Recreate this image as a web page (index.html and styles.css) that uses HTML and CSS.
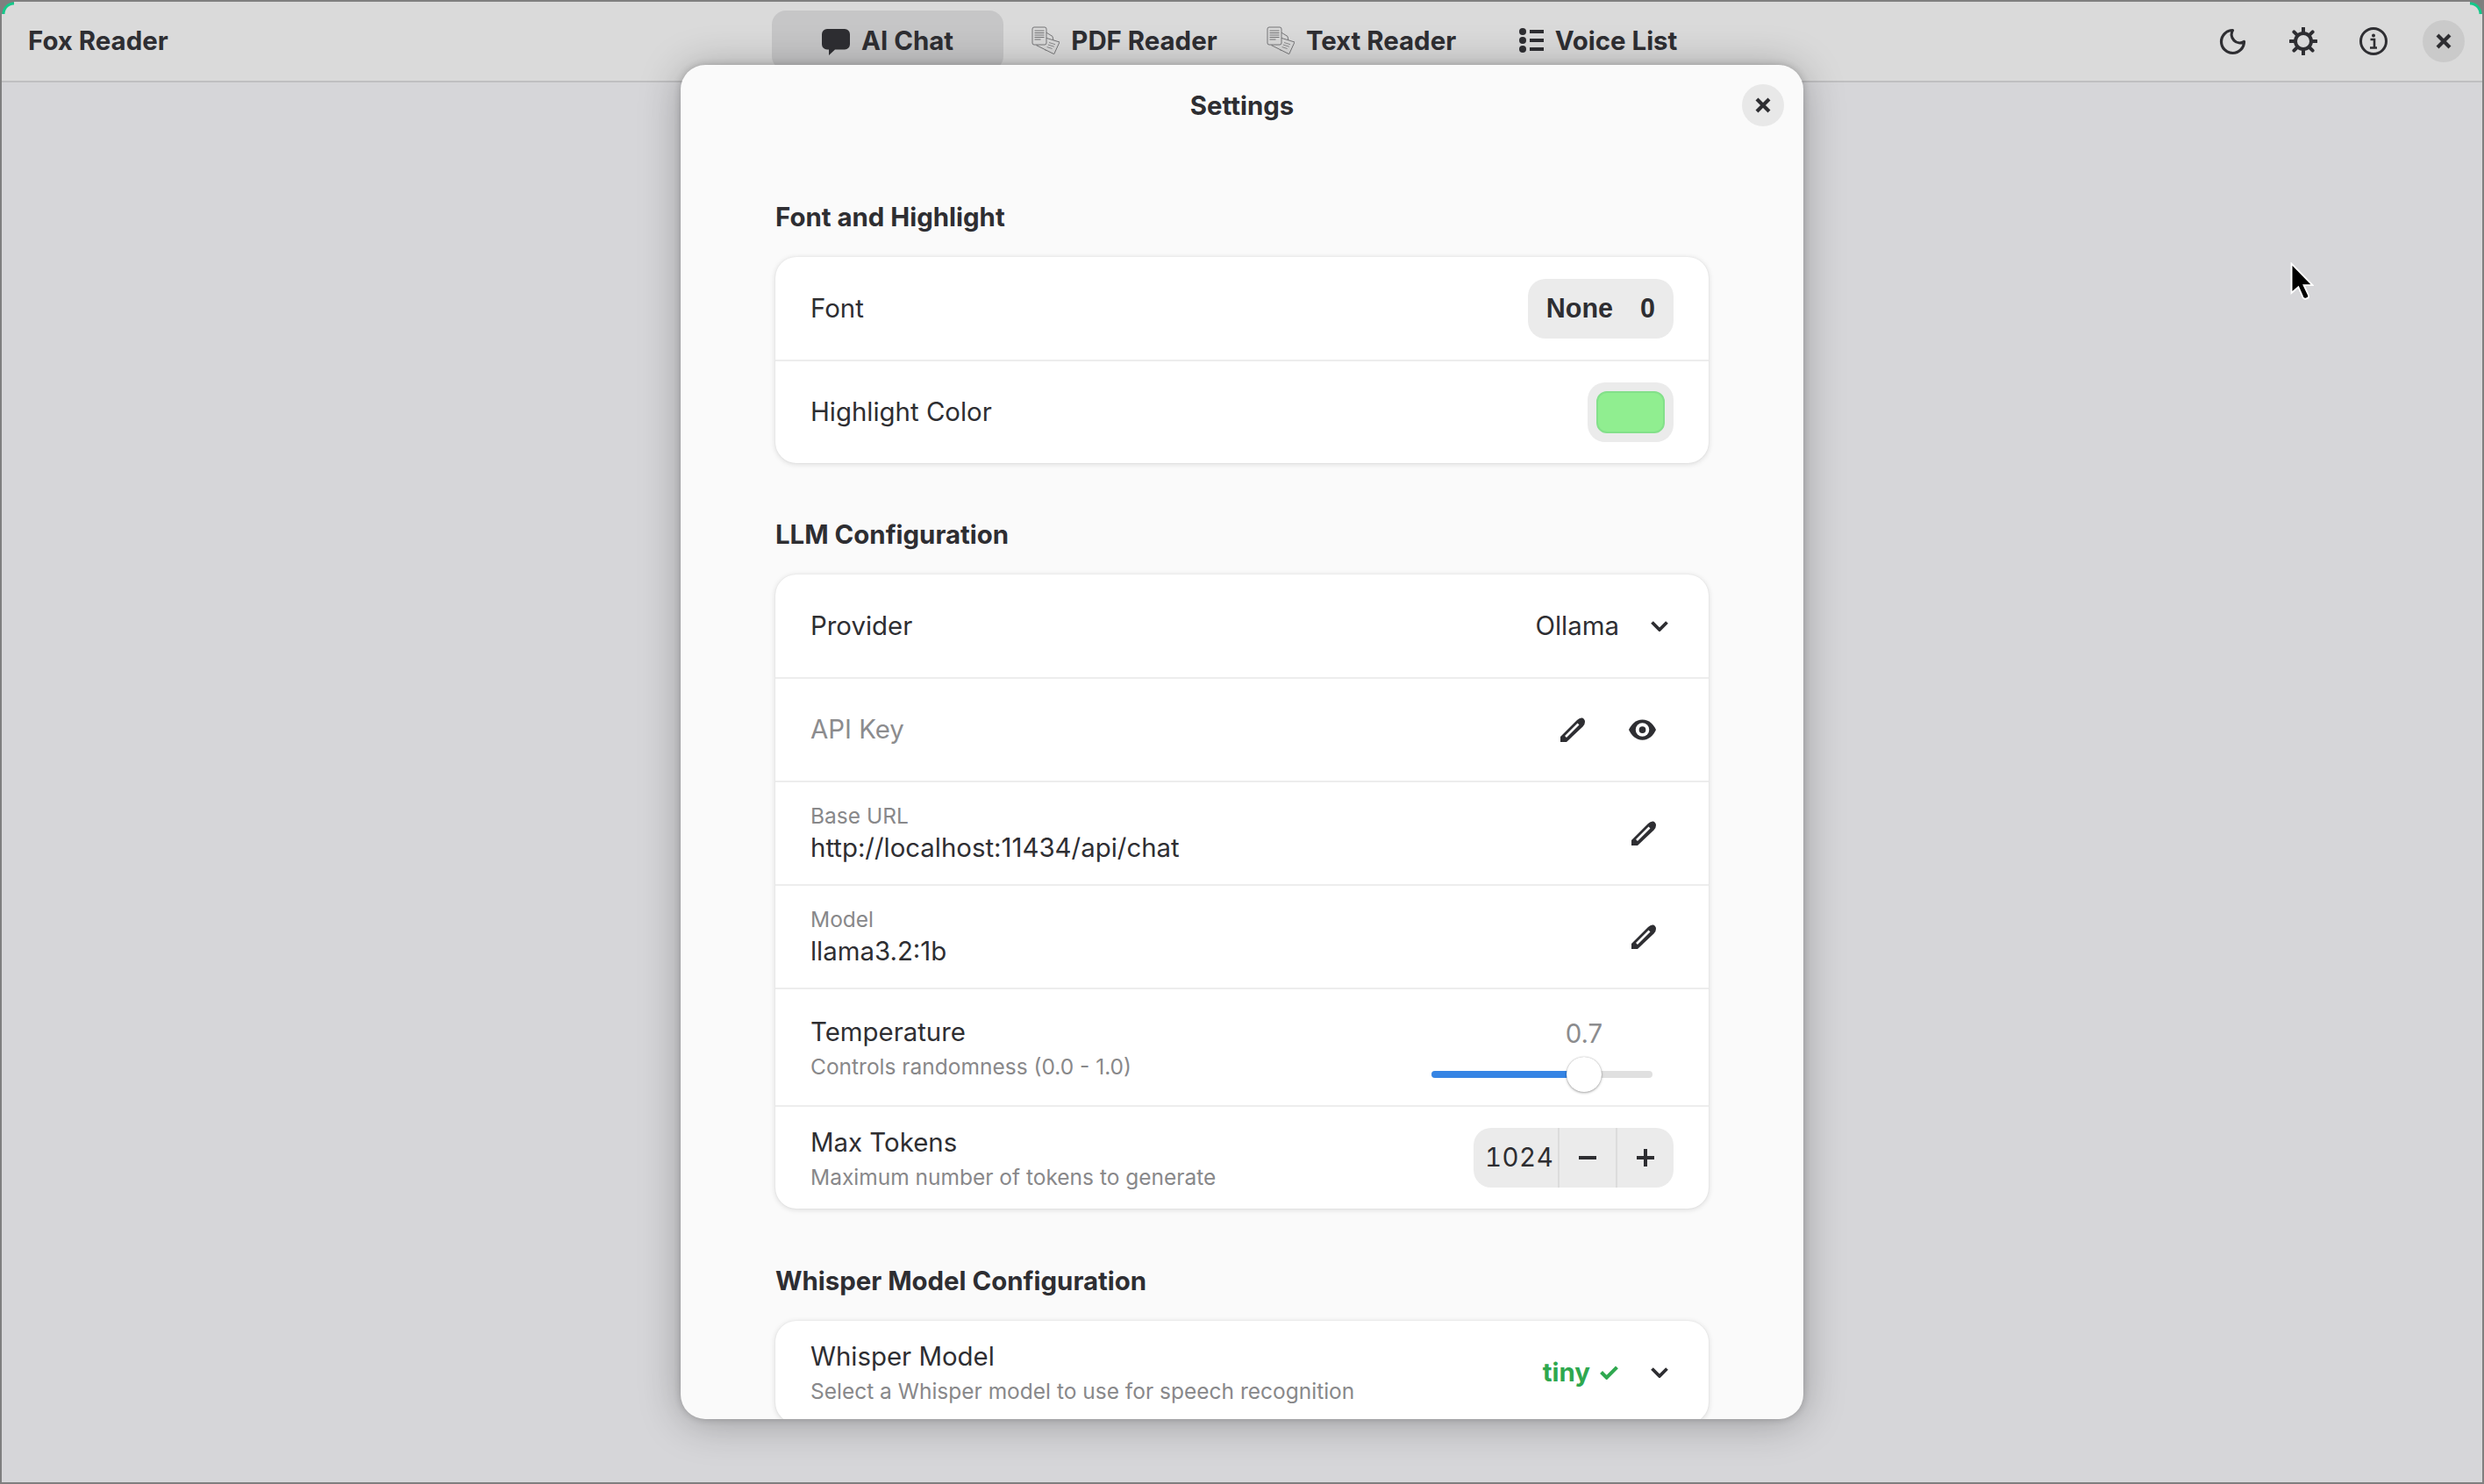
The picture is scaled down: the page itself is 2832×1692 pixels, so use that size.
FILE: index.html
```html
<!DOCTYPE html>
<html>
<head>
    <title>Fox Reader</title>
    <link rel="stylesheet" href="styles.css">
</head>
<body>
    <div class="window">
        <header class="topbar">
            <div class="app-title">Fox Reader</div>
            <nav class="tabs">
                <div class="tab active">
                    <svg class="chat-icon" viewBox="0 0 32 30"><path d="M6 0h20a6 6 0 0 1 6 6v11.500a6 6 0 0 1-6 6H15L8 30v-6.500H6a6 6 0 0 1-6-6V6a6 6 0 0 1 6-6z" fill="#2e2e32"/></svg>
                    <span>AI Chat</span>
                </div>
                <div class="tab">
                    <svg class="tab-icon" viewBox="0 0 32 32"><use href="#docs"/></svg>
                    <span>PDF Reader</span>
                </div>
                <div class="tab">
                    <svg class="tab-icon" viewBox="0 0 32 32"><use href="#docs"/></svg>
                    <span>Text Reader</span>
                </div>
                <div class="tab">
                    <svg class="list-icon" viewBox="0 0 28 28"><circle cx="4" cy="4" r="4" fill="#2e2e32"/><circle cx="4" cy="14" r="4" fill="#2e2e32"/><circle cx="4" cy="24" r="4" fill="#2e2e32"/><path d="M12 2h16v4H12zM12 12h16v4H12zM12 22h16v4H12z" fill="#2e2e32"/></svg>
                    <span>Voice List</span>
                </div>
            </nav>
            <div class="top-actions">
                <button class="icon-btn">
                    <svg viewBox="0 0 32 32"><path d="M15.500 3.500a9.500 9.500 0 0 0 13 13 13 13 0 1 1-13-13z" fill="none" stroke="#2e2e32" stroke-width="3.200" stroke-linejoin="round"/></svg>
                </button>
                <button class="icon-btn">
                    <svg viewBox="0 0 32 32"><circle cx="16" cy="16" r="9" fill="none" stroke="#2e2e32" stroke-width="4"/><path d="M16 1v5M16 26v5M1 16h5M26 16h5M5.400 5.400l3.500 3.500M23.100 23.100l3.500 3.500M5.400 26.600l3.500-3.500M23.100 8.900l3.500-3.500" stroke="#2e2e32" stroke-width="4" stroke-linecap="round"/></svg>
                </button>
                <button class="icon-btn">
                    <svg viewBox="0 0 32 32"><circle cx="16" cy="16" r="14.500" fill="none" stroke="#2e2e32" stroke-width="3"/><circle cx="16" cy="9.500" r="2" fill="#2e2e32"/><path d="M12.500 14h4.500v9M12 23.500h8" fill="none" stroke="#2e2e32" stroke-width="2.600"/></svg>
                </button>
                <button class="icon-btn round">
                    <svg class="x-icon" viewBox="0 0 20 20"><path d="M3 3l14 14M17 3L3 17" stroke="#2e2e32" stroke-width="4.200"/></svg>
                </button>
            </div>
        </header>
        <main class="content"></main>

        <section class="modal">
            <div class="modal-head">
                <div class="modal-title">Settings</div>
                <button class="modal-close">
                    <svg class="x-icon" viewBox="0 0 20 20"><path d="M3 3l14 14M17 3L3 17" stroke="#2e2e32" stroke-width="4.200"/></svg>
                </button>
            </div>
            <div class="modal-body">
                <h3>Font and Highlight</h3>
                <div class="card">
                    <div class="row">
                        <div class="row-label">Font</div>
                        <div class="pill"><span>None</span><span>0</span></div>
                    </div>
                    <div class="row">
                        <div class="row-label">Highlight Color</div>
                        <div class="swatch-btn"><div class="swatch"></div></div>
                    </div>
                </div>

                <h3>LLM Configuration</h3>
                <div class="card wide-gap">
                    <div class="row">
                        <div class="row-label">Provider</div>
                        <div class="row-end">
                            <span class="select-value">Ollama</span>
                            <svg class="chevron" viewBox="0 0 20 12"><use href="#chev"/></svg>
                        </div>
                    </div>
                    <div class="row">
                        <div class="row-label muted">API Key</div>
                        <div class="row-end icons">
                            <svg class="edit-icon" viewBox="0 0 28 28"><use href="#pencil"/></svg>
                            <svg class="eye-icon" viewBox="0 0 32 24"><path d="M16 0C8 0 3 5.500 0 12c3 6.500 8 12 16 12s13-5.500 16-12C29 5.500 24 0 16 0z" fill="#2e2e32"/><circle cx="16" cy="12" r="8" fill="#fff"/><circle cx="16" cy="12" r="4" fill="#2e2e32"/></svg>
                        </div>
                    </div>
                    <div class="row">
                        <div class="stack tight">
                            <div class="field-label">Base URL</div>
                            <div class="field-value">http://localhost:11434/api/chat</div>
                        </div>
                        <div class="row-end icons">
                            <svg class="edit-icon" viewBox="0 0 28 28"><use href="#pencil"/></svg>
                        </div>
                    </div>
                    <div class="row">
                        <div class="stack tight">
                            <div class="field-label">Model</div>
                            <div class="field-value">llama3.2:1b</div>
                        </div>
                        <div class="row-end icons">
                            <svg class="edit-icon" viewBox="0 0 28 28"><use href="#pencil"/></svg>
                        </div>
                    </div>
                    <div class="row tall">
                        <div class="stack">
                            <div class="row-label">Temperature</div>
                            <div class="row-sub">Controls randomness (0.0 - 1.0)</div>
                        </div>
                        <div class="slider-box">
                            <div class="slider-value">0.7</div>
                            <div class="slider">
                                <div class="slider-fill" style="width: 68%"></div>
                                <div class="slider-knob"></div>
                            </div>
                        </div>
                    </div>
                    <div class="row">
                        <div class="stack">
                            <div class="row-label">Max Tokens</div>
                            <div class="row-sub">Maximum number of tokens to generate</div>
                        </div>
                        <div class="spin">
                            <div class="spin-value">1024</div>
                            <div class="spin-btn"><svg viewBox="0 0 22 22"><path d="M1 11h20" stroke="#2e2e32" stroke-width="4"/></svg></div>
                            <div class="spin-btn"><svg viewBox="0 0 22 22"><path d="M1 11h20M11 1v20" stroke="#2e2e32" stroke-width="4"/></svg></div>
                        </div>
                    </div>
                </div>

                <h3>Whisper Model Configuration</h3>
                <div class="card">
                    <div class="row">
                        <div class="stack">
                            <div class="row-label">Whisper Model</div>
                            <div class="row-sub">Select a Whisper model to use for speech recognition</div>
                        </div>
                        <div class="row-end">
                            <span class="model-state">tiny</span>
                            <svg class="check" viewBox="0 0 22 17"><path d="M1.500 8l6.500 6.500L20.500 2" fill="none" stroke="#2fa84f" stroke-width="4.400"/></svg>
                            <svg class="chevron" viewBox="0 0 20 12"><use href="#chev"/></svg>
                        </div>
                    </div>
                </div>
            </div>
        </section>

        <svg class="cursor" viewBox="0 0 26 44"><path d="M1.500 1.500v32l7.500-6.500 5 11.500q1 2 3.500 1.500l2-1q1.500-1 .5-3.500L15 25h9.500z" fill="#000" stroke="#fff" stroke-width="1.800"/></svg>
    </div>

    <svg class="defs" width="0" height="0">
        <defs>
            <g id="docs" fill="#d9d9d9" stroke="#767678" stroke-width="1">
                <path d="M16 6.500l8 5 2 10-10 6z"/>
                <path d="M15.700 13L32 18l-6.300 13.700L5.700 21.700z"/>
                <path d="M20 18.500l7 2.200M18.800 21l7 2.200M17.600 23.500l6 2" fill="none" stroke-width=".8"/>
                <rect x="1" y="1" width="16" height="20" rx="2"/>
                <path d="M3.500 5h11M3.500 7.500h11M3.500 10h11M3.500 12.500h11M3.500 15h7" fill="none" stroke-width="1.100"/>
            </g>
            <path id="chev" d="M1.500 1.500l8.500 8.500 8.500-8.500" fill="none" stroke="#2e2e32" stroke-width="3.800"/>
            <g id="pencil">
                <path d="M0 28v-6L19 3Q22 0 25 .5 28 2 28 5q0 3-2.500 5.500L7 28z" fill="#2e2e32"/>
                <path d="M6 22L20.500 7.500" stroke="#fff" stroke-width="2.600"/>
            </g>
        </defs>
    </svg>
</body>
</html>
```

FILE: styles.css
```css
* {
    box-sizing: border-box;
}
html, body {
    margin: 0;
    height: 100%;
}
body {
    font-family: Inter, "Noto Sans", sans-serif;
    color: #2e2e32;
    overflow: hidden;
}
button {
    border: none;
    background: none;
    padding: 0;
    font: inherit;
}
.defs {
    position: absolute;
}
.window {
    position: relative;
    width: 2832px;
    height: 1692px;
    display: flex;
    flex-direction: column;
    background: #d6d6d9;
    border: 2px solid #7f7f7f;
    overflow: hidden;
}
/* green arcs in the two top corners of the window */
.window::before,
.window::after {
    content: "";
    position: absolute;
    top: 0;
    width: 14px;
    height: 14px;
    z-index: 1;
}
.window::before {
    left: 0;
    background: radial-gradient(circle at 100% 100%, transparent 10px, #14c98a 11px, #14c98a 13px, #7f7f7f 14px);
}
.window::after {
    right: 0;
    background: radial-gradient(circle at 0 100%, transparent 10px, #14c98a 11px, #14c98a 13px, #7f7f7f 14px);
}

/* top bar */
.topbar {
    height: 92px;
    flex: none;
    display: grid;
    grid-template-columns: 878px auto 1fr;
    align-items: center;
    background: #dadada;
    border-bottom: 2px solid #bfbfc1;
}
.app-title {
    padding-left: 30px;
    margin-top: -2px;
    font-size: 29.4px;
    font-weight: 700;
}
.tabs {
    display: flex;
    gap: 6px;
    height: 68px;
    margin-top: -2px;
}
.tab {
    width: 264px;
    display: flex;
    align-items: center;
    justify-content: center;
    gap: 13px;
    border-radius: 16px;
    font-size: 29.4px;
    font-weight: 700;
}
.tab.active {
    background: #c6c6c7;
}
.tab-icon {
    width: 32px;
    height: 32px;
}
.chat-icon {
    width: 32px;
    height: 30px;
    margin-top: 3px;
}
.list-icon {
    width: 28px;
    height: 28px;
}
.top-actions {
    display: flex;
    justify-content: flex-end;
    align-items: center;
    gap: 32px;
    padding-right: 20px;
}
.icon-btn {
    width: 48px;
    height: 48px;
    display: flex;
    align-items: center;
    justify-content: center;
}
.icon-btn svg {
    width: 32px;
    height: 32px;
}
.icon-btn.round {
    border-radius: 50%;
    background: #cacaca;
}
.icon-btn svg.x-icon,
.x-icon {
    width: 20px;
    height: 20px;
}
.content {
    flex: 1;
}

/* settings dialog */
.modal {
    position: absolute;
    left: 774px;
    top: 72px;
    width: 1280px;
    height: 1544px;
    background: #fafafa;
    border-radius: 28px;
    box-shadow: 0 4px 48px rgba(0, 0, 0, .28), 0 0 8px rgba(0, 0, 0, .2);
    overflow: hidden;
}
.modal-head {
    position: relative;
    height: 92px;
    display: flex;
    align-items: center;
    justify-content: center;
}
.modal-title {
    font-size: 29.4px;
    font-weight: 700;
}
.modal-close {
    position: absolute;
    right: 22px;
    top: 22px;
    width: 48px;
    height: 48px;
    border-radius: 50%;
    background: #e8e8e8;
    display: flex;
    align-items: center;
    justify-content: center;
}
.modal-body {
    padding: 63px 108px 0;
}
h3 {
    margin: 0 0 26px;
    font-size: 29.4px;
    line-height: 38px;
    font-weight: 700;
}
.card {
    background: #fff;
    border-radius: 24px;
    box-shadow: 0 1px 6px rgba(0, 0, 0, .14), 0 0 2px rgba(0, 0, 0, .06);
    margin-bottom: 63px;
}
.card.wide-gap {
    margin-bottom: 64px;
}
.row {
    height: 118px;
    padding: 0 40px;
    display: flex;
    align-items: center;
    justify-content: space-between;
    border-top: 2px solid #ededed;
}
.row:first-child {
    border-top: none;
    height: 117px;
}
.row.tall {
    height: 134px;
}
.row-label {
    font-size: 29.4px;
    line-height: 40px;
}
.muted {
    color: #8c8c8e;
}
.row-sub {
    font-size: 24.5px;
    line-height: 32px;
    color: #88888a;
}
.stack {
    display: flex;
    flex-direction: column;
    gap: 3px;
}
.stack.tight {
    gap: 2px;
}
.field-label {
    font-size: 24.5px;
    line-height: 32px;
    color: #88888a;
}
.field-value {
    font-size: 29.4px;
    line-height: 38px;
}
.pill {
    height: 68px;
    padding: 0 21px;
    display: flex;
    align-items: center;
    gap: 31px;
    background: #ebebeb;
    border-radius: 20px;
    font-family: "Liberation Sans", Arial, sans-serif;
    font-size: 30.5px;
    font-weight: 700;
}
.swatch-btn {
    width: 98px;
    height: 68px;
    padding: 10px;
    background: #ebebeb;
    border-radius: 20px;
}
.swatch {
    height: 100%;
    background: #90ee90;
    border: 2px solid #83e08a;
    border-radius: 12px;
}
.row-end {
    display: flex;
    align-items: center;
}
.row-end.icons {
    gap: 50px;
    padding-right: 20px;
}
.select-value {
    font-size: 29.4px;
    margin-right: 36px;
}
.chevron {
    width: 20px;
    height: 12px;
    margin-right: 6px;
}
.edit-icon {
    width: 28px;
    height: 28px;
}
.eye-icon {
    width: 31px;
    height: 24px;
}
.model-state {
    color: #2fa84f;
    font-size: 29.4px;
    font-weight: 700;
}
.check {
    width: 21px;
    height: 16px;
    margin: 0 37px 0 11px;
}

/* slider */
.slider-box {
    width: 252px;
    margin-right: 24px;
    display: flex;
    flex-direction: column;
}
.slider-value {
    width: 348px;
    text-align: center;
    font-size: 29.4px;
    line-height: 38px;
    color: #8c8c8e;
}
.slider {
    position: relative;
    height: 8px;
    margin-top: 23px;
    background: #e0e0e0;
    border-radius: 4px;
}
.slider-fill {
    height: 100%;
    background: #3584e4;
    border-radius: 4px 0 0 4px;
}
.slider-knob {
    position: absolute;
    left: 154px;
    top: -16px;
    width: 40px;
    height: 40px;
    border-radius: 50%;
    background: #fff;
    box-shadow: 0 1px 3px rgba(0, 0, 0, .35), 0 0 1px rgba(0, 0, 0, .3);
}

/* number spinner */
.spin {
    height: 68px;
    display: flex;
    background: #ebebeb;
    border-radius: 20px;
}
.spin-value {
    width: 96px;
    padding-left: 13px;
    font-size: 29.4px;
    line-height: 68px;
    letter-spacing: .5px;
    font-feature-settings: "tnum";
}
.spin-btn {
    width: 66px;
    border-left: 2px solid #dcdcdc;
    display: flex;
    align-items: center;
    justify-content: center;
}
.spin-btn svg {
    width: 22px;
    height: 22px;
}

.cursor {
    position: absolute;
    left: 2609px;
    top: 297px;
    width: 27px;
    height: 46px;
}
```
